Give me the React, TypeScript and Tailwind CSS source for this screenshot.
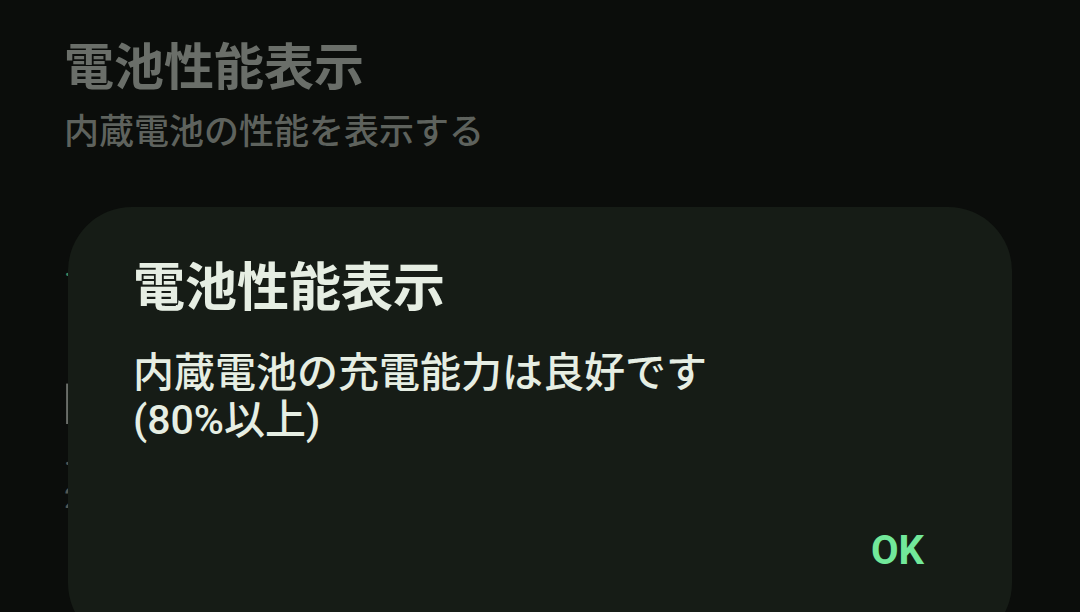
import React from "react";

const font = { fontFamily: 'Roboto, "Noto Sans CJK JP", "Noto Sans", sans-serif' };

export default function App() {
  return (
    <div
      className="relative w-[1080px] h-[612px] overflow-hidden bg-[#0b0d0b]"
      style={font}
    >
      {/* underlying page */}
      <div className="flex flex-col pl-[64px] pt-[37px]">
        <div className="text-[50px] leading-[62px] font-bold text-[#6a6e69]">
          電池性能表示
        </div>
        <div className="mt-[12px] text-[35px] leading-[44px] font-medium text-[#5e625d]">
          内蔵電池の性能を表示する
        </div>
        <div className="mt-[96px] text-[30px] leading-[30px] text-[#3f8a5c]">.</div>
        <div className="mt-[95px] -ml-[2px] text-[54px] leading-[60px] text-[#6a6e69]">l</div>
        <div className="mt-[4px] text-[30px] leading-[30px] text-[#555954]">.</div>
        <div className="mt-[8px] text-[30px] leading-[40px] text-[#555954]">2</div>
      </div>

      {/* dialog overlay */}
      <div className="absolute left-[68px] top-[207px] w-[944px] h-[440px] rounded-[64px] bg-[#161c16] flex flex-col pl-[65px] pr-[90px] pt-[48px]">
        <div className="text-[52px] leading-[68px] font-bold text-[#e6eee3]">
          電池性能表示
        </div>
        <div className="mt-[27px] text-[41px] leading-[47px] font-medium text-[#e6eee3]">
          <div>内蔵電池の充電能力は良好です</div>
          <div>(80%以上)</div>
        </div>
        <div className="flex justify-end mt-[82px] -mr-[2px]">
          <button className="text-[40px] leading-[50px] font-bold text-[#72e89a]">
            OK
          </button>
        </div>
      </div>
    </div>
  );
}
